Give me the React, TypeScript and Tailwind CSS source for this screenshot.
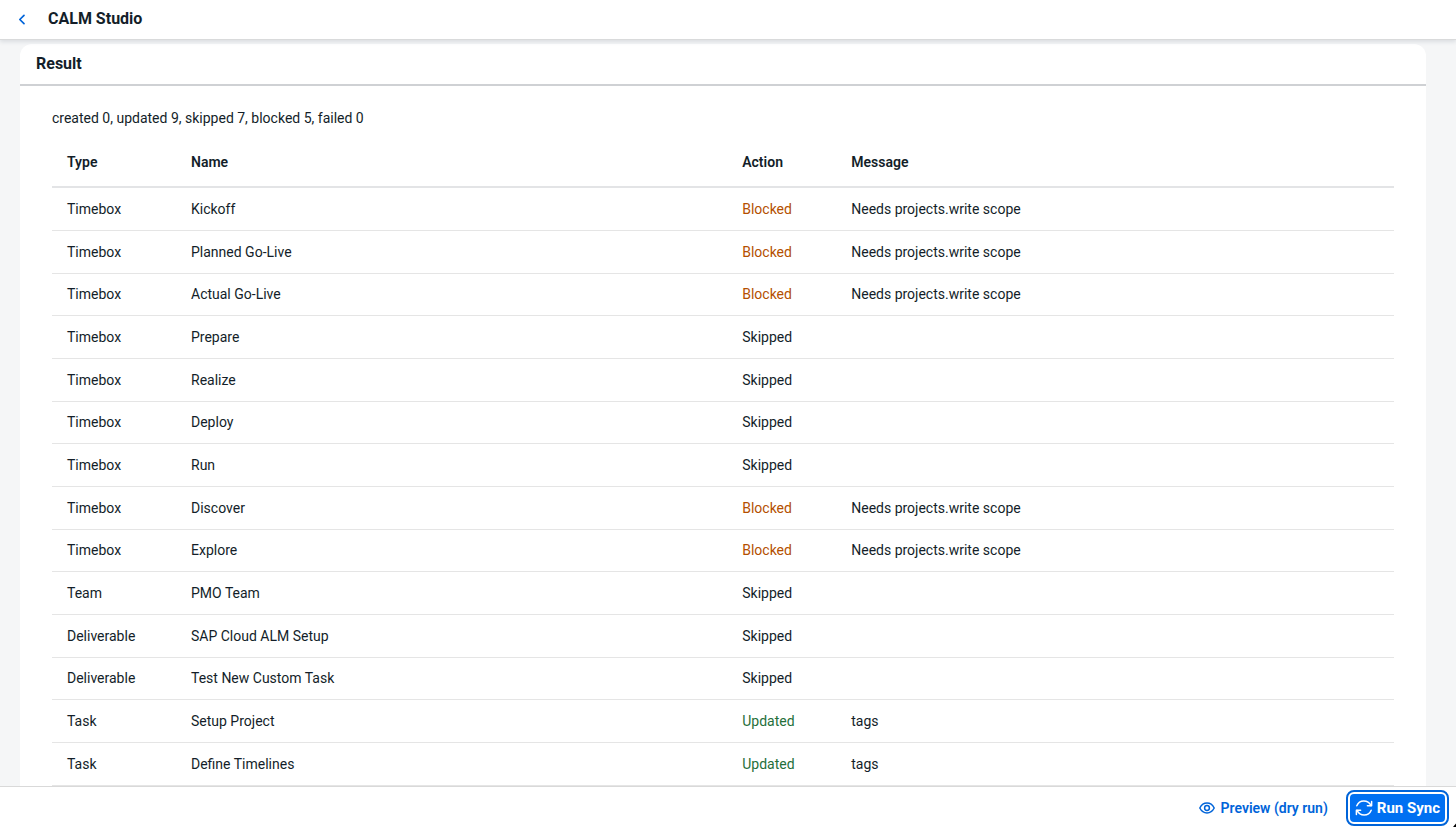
type Action = "Blocked" | "Skipped" | "Updated";

interface ResultRow {
  type: string;
  name: string;
  action: Action;
  message: string;
}

const SCOPE_MESSAGE = "Needs projects.write scope";

const ROWS: ResultRow[] = [
  { type: "Timebox", name: "Kickoff", action: "Blocked", message: SCOPE_MESSAGE },
  { type: "Timebox", name: "Planned Go-Live", action: "Blocked", message: SCOPE_MESSAGE },
  { type: "Timebox", name: "Actual Go-Live", action: "Blocked", message: SCOPE_MESSAGE },
  { type: "Timebox", name: "Prepare", action: "Skipped", message: "" },
  { type: "Timebox", name: "Realize", action: "Skipped", message: "" },
  { type: "Timebox", name: "Deploy", action: "Skipped", message: "" },
  { type: "Timebox", name: "Run", action: "Skipped", message: "" },
  { type: "Timebox", name: "Discover", action: "Blocked", message: SCOPE_MESSAGE },
  { type: "Timebox", name: "Explore", action: "Blocked", message: SCOPE_MESSAGE },
  { type: "Team", name: "PMO Team", action: "Skipped", message: "" },
  { type: "Deliverable", name: "SAP Cloud ALM Setup", action: "Skipped", message: "" },
  { type: "Deliverable", name: "Test New Custom Task", action: "Skipped", message: "" },
  { type: "Task", name: "Setup Project", action: "Updated", message: "tags" },
  { type: "Task", name: "Define Timelines", action: "Updated", message: "tags" },
];

const ACTION_COLOR: Record<Action, string> = {
  Blocked: "text-[#b44f00]",
  Skipped: "text-[#131e29]",
  Updated: "text-[#256f3a]",
};

function BackIcon() {
  return (
    <svg viewBox="0 0 16 16" className="size-4" fill="none" stroke="currentColor" strokeWidth="1.7" strokeLinecap="round" strokeLinejoin="round" aria-hidden="true">
      <path d="M10 4.3 5.8 8.5 10 12.7" />
    </svg>
  );
}

function EyeIcon() {
  return (
    <svg viewBox="0 0 16 16" className="size-4" fill="none" stroke="currentColor" strokeWidth="1.5" strokeLinejoin="round" aria-hidden="true">
      <path d="M.8 8C2.4 4.9 5 3.1 8 3.1S13.6 4.9 15.2 8C13.6 11.1 11 12.9 8 12.9S2.4 11.1.8 8Z" />
      <circle cx="8" cy="8" r="2.4" />
    </svg>
  );
}

function SyncIcon() {
  return (
    <svg viewBox="0 0 18 18" className="size-[18px]" fill="none" stroke="currentColor" strokeWidth="1.5" strokeLinecap="round" strokeLinejoin="round" aria-hidden="true">
      <path d="M1.8 6.8C3 3.9 5.7 2 8.8 2c3.100 0 5.800 1.800 7.200 4.600" />
      <path d="M16.600 2.600V6.800H12.400" />
      <path d="M16.200 11.200C15 14.100 12.300 16 9.200 16c-3.100 0-5.800-1.800-7.200-4.600" />
      <path d="M1.400 15.400V11.200H5.600" />
    </svg>
  );
}

function PointerTip() {
  return (
    <svg viewBox="0 0 4 4" className="pointer-events-none fixed right-0 bottom-0 z-20 size-1" aria-hidden="true">
      <path d="M1 4 4 .5V4Z" fill="#000" />
    </svg>
  );
}

export default function App() {
  return (
    <div className="flex h-screen flex-col overflow-hidden bg-[#f5f6f7] font-[Roboto,'Liberation_Sans',sans-serif] text-sm leading-5 text-[#131e29]">
      <header className="z-10 flex h-10 shrink-0 items-center gap-[14px] border-b border-[#d9dadb] bg-white pb-[2px] pl-[10px] shadow-[0_2px_4px_rgba(34,53,72,0.12)]">
        <button type="button" aria-label="Back" className="flex size-6 items-center justify-center text-[#0064d9]">
          <BackIcon />
        </button>
        <h1 className="text-base font-bold">CALM Studio</h1>
      </header>

      <main className="min-h-0 flex-1 overflow-hidden pt-1 pr-[30px] pl-5">
        <section aria-labelledby="result-title" className="min-h-full rounded-t-xl bg-white">
          <div className="border-b-2 border-[#cfd1d4] px-4 py-[10px]">
            <h2 id="result-title" className="text-base leading-5 font-bold">Result</h2>
          </div>
          <div className="px-8 pt-[22px]">
            <p>created 0, updated 9, skipped 7, blocked 5, failed 0</p>
            <table className="mt-[10px] w-full table-fixed border-collapse text-left">
              <thead>
                <tr className="h-[49px] border-b-2 border-[#e3e4e6]">
                  <th className="w-[124px] pl-[15px] font-semibold">Type</th>
                  <th className="w-[41%] pl-[15px] font-semibold">Name</th>
                  <th className="w-[109px] pl-4 font-semibold">Action</th>
                  <th className="pl-4 font-semibold">Message</th>
                </tr>
              </thead>
              <tbody>
                {ROWS.map((row) => (
                  <tr key={row.name} className="h-[43px] border-b border-[#e5e5e5] nth-[3n]:h-[42px]">
                    <td className="pl-[15px]">{row.type}</td>
                    <td className="pl-[15px]">{row.name}</td>
                    <td className={`pl-4 ${ACTION_COLOR[row.action]}`}>{row.action}</td>
                    <td className="pl-4">{row.message}</td>
                  </tr>
                ))}
              </tbody>
            </table>
          </div>
        </section>
      </main>

      <footer className="flex h-[41px] shrink-0 items-center justify-end gap-5 border-t border-[#d9d9d9] bg-white pt-px pr-[9px]">
        <button type="button" className="flex items-center gap-[6px] font-semibold text-[#0064d9]">
          <EyeIcon />
          Preview (dry run)
        </button>
        <button type="button" className="flex h-8 items-center gap-1 rounded-md border-2 border-white bg-[#0070f2] px-[5px] text-[15px] font-bold text-white outline-2 outline-[#0064d9]">
          <SyncIcon />
          Run Sync
        </button>
      </footer>
      <PointerTip />
    </div>
  );
}
